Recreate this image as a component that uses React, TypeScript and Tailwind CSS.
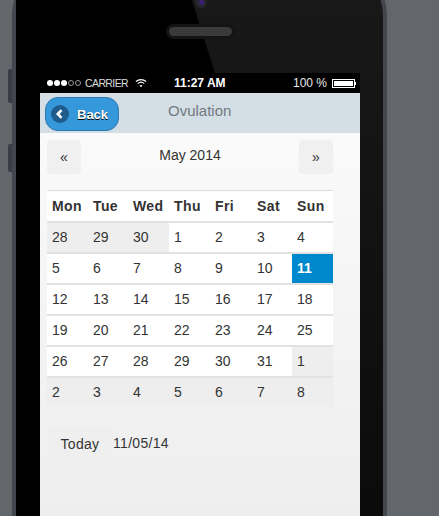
import React from 'react';

const widths = 'grid grid-cols-[41px_40px_41px_41px_42px_40px_41px]';

const days = ['Mon', 'Tue', 'Wed', 'Thu', 'Fri', 'Sat', 'Sun'];

const weeks: { n: number; muted?: boolean; active?: boolean }[][] = [
  [{ n: 28, muted: true }, { n: 29, muted: true }, { n: 30, muted: true }, { n: 1 }, { n: 2 }, { n: 3 }, { n: 4 }],
  [{ n: 5 }, { n: 6 }, { n: 7 }, { n: 8 }, { n: 9 }, { n: 10 }, { n: 11, active: true }],
  [{ n: 12 }, { n: 13 }, { n: 14 }, { n: 15 }, { n: 16 }, { n: 17 }, { n: 18 }],
  [{ n: 19 }, { n: 20 }, { n: 21 }, { n: 22 }, { n: 23 }, { n: 24 }, { n: 25 }],
  [{ n: 26 }, { n: 27 }, { n: 28 }, { n: 29 }, { n: 30 }, { n: 31 }, { n: 1, muted: true }],
  [{ n: 2, muted: true }, { n: 3, muted: true }, { n: 4, muted: true }, { n: 5, muted: true }, { n: 6, muted: true }, { n: 7, muted: true }, { n: 8, muted: true }],
];

const StatusBar = () => (
  <div className="flex h-[20px] items-center bg-black pl-[7px] text-white">
    <div className="flex w-[34px] items-center gap-[1px]">
      {[0, 1, 2].map(i => (
        <span key={i} className="h-[6px] w-[6px] rounded-full bg-white" />
      ))}
      {[0, 1].map(i => (
        <span key={i} className="h-[6px] w-[6px] rounded-full border border-[#999]" />
      ))}
    </div>
    <span className="ml-[4px] w-[42px] text-[10.5px] leading-none tracking-[-0.6px] text-[#ddd]">CARRIER</span>
    <svg className="ml-[8px]" width="12" height="10" viewBox="0 0 13 10" fill="none" stroke="#fff" strokeWidth="1.2">
      <path d="M1 3.4C4.2.6 8.8.6 12 3.4" />
      <path d="M3 5.6c2-1.7 5-1.7 7 0" />
      <path d="M6.5 9.6 4.9 7.8c1-.8 2.2-.8 3.2 0z" fill="#fff" stroke="none" />
    </svg>
    <span className="ml-[27px] w-[52px] text-[12px] font-bold leading-none">11:27 AM</span>
    <span className="ml-[67px] text-[12px] leading-none text-[#e8e8e8]">100 %</span>
    <div className="ml-[5px] flex items-center">
      <div className="h-[9px] w-[23px] border border-white bg-white ring-1 ring-inset ring-black" />
      <div className="h-[3px] w-[1px] bg-white" />
    </div>
  </div>
);

const Header = () => (
  <div className="relative h-[40px] bg-[#d3dee5]">
    <button className="absolute left-[5px] top-[4px] flex h-[34px] w-[74px] items-center rounded-[13px] border border-[#2a76ae] bg-[#3498db] pl-[5px]">
      <span className="flex h-[18px] w-[18px] items-center justify-center rounded-full bg-[#1f5c8b]">
        <svg width="10" height="10" viewBox="0 0 10 10" fill="none" stroke="#fff" strokeWidth="2.6">
          <path d="M6.5 1.2 2.8 5l3.7 3.8" />
        </svg>
      </span>
      <span className="ml-[8px] pt-[2px] text-[13px] font-bold text-white [text-shadow:0_1px_0_#000]">Back</span>
    </button>
    <div className="pl-[128px] pt-[7px] text-[15px] leading-[21px] text-[#737980]">Ovulation</div>
  </div>
);

const Calendar = () => (
  <div className="w-[286px]">
    <div className={`${widths} h-[31px] border-t border-[#ddd] bg-white`}>
      {days.map(d => (
        <div key={d} className="pl-[5px] pt-[5px] text-[14px] font-bold leading-[20px] tracking-[0.4px] text-[#333]">
          {d}
        </div>
      ))}
    </div>
    {weeks.map((week, i) => (
      <div key={i} className={`${widths} h-[31px] border-t-2 border-[#e2e2e2]`}>
        {week.map((d, j) => (
          <div
            key={j}
            className={`pl-[5px] pt-[4px] text-[14px] leading-[20px] ${
              d.active ? 'bg-[#0088cc] font-bold text-white' : d.muted ? 'bg-[#eeeeee] text-[#333]' : 'bg-white text-[#333]'
            }`}
          >
            {d.n}
          </div>
        ))}
      </div>
    ))}
  </div>
);

export default function App() {
  return (
    <div className="relative h-[516px] w-[439px] overflow-hidden bg-[#63666a] [font-family:'Liberation_Sans',Arial,sans-serif]">
      {/* side buttons */}
      <div className="absolute left-[8px] top-[69px] h-[34px] w-[4px] rounded-l-[2px] bg-[#3a3d44]" />
      <div className="absolute left-[8px] top-[144px] h-[28px] w-[4px] rounded-l-[2px] bg-[#3a3d44]" />

      <div className="relative -mt-[35px] ml-[12px] h-[551px] w-[375px] rounded-t-[50px] border-x-[4px] border-t-[4px] border-x-[#43464e] border-t-[#777] bg-gradient-to-b from-[#191919] to-[#0b0b0b] pl-[24px] pt-[104px]">
        {/* black half of the glass reflection */}
        <svg className="absolute left-0 top-0" width="367" height="547">
          <path d="M0 0H166L199 104V547H0z" fill="#000" />
        </svg>
        {/* camera + speaker */}
        <div className="absolute left-[179px] top-[27px] flex h-[12px] w-[12px] items-center justify-center rounded-full bg-[#26262c]">
          <div className="h-[5px] w-[5px] rounded-full bg-[#3a1f78]" />
        </div>
        <div className="absolute left-[150px] top-[55px] flex h-[15px] w-[69px] items-center justify-center rounded-full bg-[#141414]">
          <div className="h-[9px] w-[63px] rounded-full bg-[#3a3a3a]" />
        </div>

        <div className="relative h-[443px] w-[320px]">
          <StatusBar />
          <Header />
          <div className="h-[383px] bg-gradient-to-b from-[#fafafa] to-[#eeeeee] px-[7px] pt-[7px]">
            <div className="flex h-[34px] w-[286px] items-center justify-between">
              <button className="h-[34px] w-[34px] rounded-[4px] bg-[#f0f0f0] text-[14px] text-[#333]">«</button>
              <span className="pb-[4px] text-[14px] text-[#333]">May 2014</span>
              <button className="h-[34px] w-[34px] rounded-[4px] bg-[#f0f0f0] text-[14px] text-[#333]">»</button>
            </div>
            <div className="mt-[16px]">
              <Calendar />
            </div>
            <div className="mt-[20px] flex items-start">
              <button className="h-[33px] w-[66px] rounded-[4px] bg-[#efefef] pt-[2px] text-[14px] tracking-[0.3px] text-[#333]">Today</button>
              <span className="pt-[6px] text-[14px] leading-[20px] tracking-[0.3px] text-[#333]">11/05/14</span>
            </div>
          </div>
        </div>
      </div>
    </div>
  );
}
